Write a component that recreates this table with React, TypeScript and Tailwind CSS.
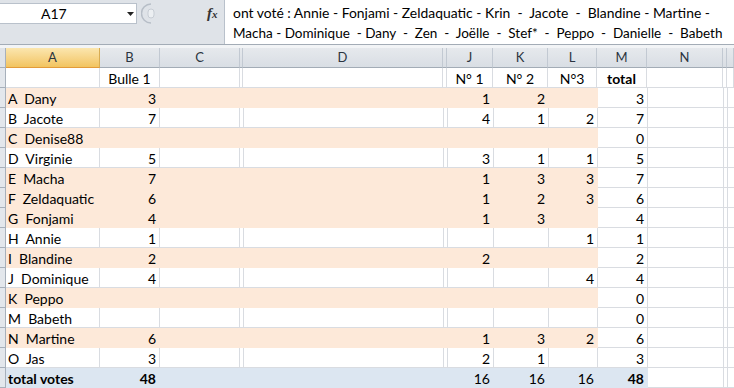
import React from 'react';

type Col = { key: string; w: number; gap?: boolean };

const COLS: Col[] = [
  { key: 'A', w: 94 },
  { key: 'B', w: 60 },
  { key: 'C', w: 80 },
  { key: 'c2', w: 3, gap: true },
  { key: 'D', w: 200 },
  { key: 'd2', w: 4, gap: true },
  { key: 'J', w: 46 },
  { key: 'K', w: 55 },
  { key: 'L', w: 49 },
  { key: 'M', w: 50 },
  { key: 'N', w: 76 },
  { key: 'n2', w: 4, gap: true },
  { key: 'O', w: 7 },
];

type Row = {
  name: string;
  b?: number;
  j?: number;
  k?: number;
  l?: number;
  m: number;
  peach?: boolean;
};

const ROWS: Row[] = [
  { name: 'A  Dany', b: 3, j: 1, k: 2, m: 3, peach: true },
  { name: 'B  Jacote', b: 7, j: 4, k: 1, l: 2, m: 7 },
  { name: 'C  Denise88', m: 0, peach: true },
  { name: 'D  Virginie', b: 5, j: 3, k: 1, l: 1, m: 5 },
  { name: 'E  Macha', b: 7, j: 1, k: 3, l: 3, m: 7, peach: true },
  { name: 'F  Zeldaquatic', b: 6, j: 1, k: 2, l: 3, m: 6, peach: true },
  { name: 'G  Fonjami', b: 4, j: 1, k: 3, m: 4, peach: true },
  { name: 'H  Annie', b: 1, l: 1, m: 1 },
  { name: 'I  Blandine', b: 2, j: 2, m: 2, peach: true },
  { name: 'J  Dominique', b: 4, l: 4, m: 4 },
  { name: 'K  Peppo', m: 0, peach: true },
  { name: 'M  Babeth', m: 0 },
  { name: 'N  Martine', b: 6, j: 1, k: 3, l: 2, m: 6, peach: true },
  { name: 'O  Jas', b: 3, j: 2, k: 1, m: 3 },
];

const PEACH_COLS = ['A', 'B', 'C', 'c2', 'D', 'd2', 'J', 'K', 'L'];
const TOTAL_COLS = [...PEACH_COLS, 'M'];

function Cell({
  col,
  fill,
  align = 'right',
  bold,
  children,
}: {
  col: Col;
  fill?: string;
  align?: 'left' | 'right' | 'center';
  bold?: boolean;
  children?: React.ReactNode;
}) {
  const border = fill ? fill : '#d9dce1';
  return (
    <div
      className={
        'h-full shrink-0 border-r border-b flex items-center pt-[1px] whitespace-pre overflow-visible ' +
        (align === 'right' ? 'justify-end pr-[3px] ' : align === 'center' ? 'justify-center ' : 'justify-start pl-[2px] ') +
        (bold ? 'font-bold ' : '')
      }
      style={{ width: col.w, backgroundColor: fill ?? '#ffffff', borderColor: border }}
    >
      {children}
    </div>
  );
}

function Strip() {
  return <div className="w-[6px] h-full shrink-0 bg-[#e3e7ec] border-r border-b border-[#a7b0bb]" />;
}

export default function App() {
  return (
    <div className="w-[734px] h-[388px] overflow-hidden bg-white text-black font-['Lato',sans-serif] text-[14px]">
      {/* formula bar */}
      <div className="flex h-[45px] bg-[#dfe3e8] border-b border-[#a3acb6]">
        <div className="w-[224px] shrink-0 flex flex-col">
          <div className="h-[3px]" />
          <div className="flex items-center h-[21px]">
            <div className="w-[137px] h-full bg-white border-y border-r border-[#b9c1cb] flex items-center relative">
              <span className="pl-[41px] text-[14px]">A17</span>
              <svg className="absolute left-[127px] top-[8px]" width="7" height="4" viewBox="0 0 7 4">
                <path d="M0 0 L7 0 L3.5 4 Z" fill="#222" />
              </svg>
            </div>
            <svg className="ml-[4px]" width="14" height="21" viewBox="0 0 14 21">
              <path d="M10 1 A9.5 9.5 0 0 0 10 20" fill="none" stroke="#b7bec7" strokeWidth="1.5" />
              <rect x="7" y="6" width="6" height="9" rx="3" fill="#eceff2" stroke="#c7cdd4" />
            </svg>
            <span className="ml-[52px] font-['Liberation_Serif',serif] italic font-bold text-[15px] text-[#333] leading-none">
              f<span className="text-[11px]">x</span>
            </span>
          </div>
          <div className="flex-1" />
        </div>
        <div className="flex-1 bg-white border-l border-[#b9c1cb] pl-[8px] pt-[3px] leading-[20px] whitespace-pre overflow-hidden">
          <div className="text-[13.9px]">ont voté : Annie - Fonjami - Zeldaquatic - Krin  -  Jacote  -  Blandine - Martine -</div>
          <div className="text-[13.5px]">Macha - Dominique  - Dany  -  Zen  -  Joëlle  -  Stef*  -  Peppo  -  Danielle  -  Babeth</div>
        </div>
      </div>
      <div className="h-[3px] bg-[#f2f4f6]" />

      {/* column headers */}
      <div className="flex h-[20px] text-[13px] text-[#2b3440]">
        <div className="w-[6px] h-full shrink-0 bg-[#dfe3e8] border-r border-b border-[#a7b0bb]" />
        {COLS.map((c) =>
          c.key === 'A' ? (
            <div
              key={c.key}
              className="h-full shrink-0 flex items-center justify-center bg-gradient-to-b from-[#fbe6ae] to-[#f2c45f] border-r border-b border-r-[#d8ac52] border-b-[#e39b3a]"
              style={{ width: c.w }}
            >
              A
            </div>
          ) : (
            <div
              key={c.key}
              className="h-full shrink-0 flex items-center justify-center bg-gradient-to-b from-[#e6e9ed] to-[#d9dee4] border-r border-b border-r-[#c2c9d2] border-b-[#a3acb6]"
              style={{ width: c.w }}
            >
              {c.gap || c.key === 'O' ? '' : c.key}
            </div>
          )
        )}
      </div>

      {/* row 1 labels */}
      <div className="flex h-[20px]">
        <Strip />
        {COLS.map((c) => {
          const label: Record<string, string> = { B: 'Bulle 1', J: 'N° 1', K: 'N° 2', L: 'N°3', M: 'total' };
          return (
            <Cell key={c.key} col={c} align="center" bold={c.key === 'M'}>
              {label[c.key]}
            </Cell>
          );
        })}
      </div>

      {/* data rows */}
      {ROWS.map((r) => (
        <div key={r.name} className="flex h-[20px]">
          <Strip />
          {COLS.map((c) => {
            const fill = r.peach && PEACH_COLS.includes(c.key) ? '#fde9d9' : undefined;
            let v: React.ReactNode = null;
            if (c.key === 'A') v = r.name;
            if (c.key === 'B') v = r.b;
            if (c.key === 'J') v = r.j;
            if (c.key === 'K') v = r.k;
            if (c.key === 'L') v = r.l;
            if (c.key === 'M') v = r.m;
            return (
              <Cell key={c.key} col={c} fill={fill} align={c.key === 'A' ? 'left' : 'right'}>
                {v}
              </Cell>
            );
          })}
        </div>
      ))}

      {/* total row */}
      <div className="flex h-[20px]">
        <Strip />
        {COLS.map((c) => {
          const fill = TOTAL_COLS.includes(c.key) ? '#dce6f1' : undefined;
          const vals: Record<string, string> = { A: 'total votes', B: '48', J: '16', K: '16', L: '16', M: '48' };
          const bold = c.key === 'A' || c.key === 'B' || c.key === 'M';
          return (
            <Cell key={c.key} col={c} fill={fill} bold={bold} align={c.key === 'A' ? 'left' : 'right'}>
              {vals[c.key]}
            </Cell>
          );
        })}
      </div>
    </div>
  );
}
